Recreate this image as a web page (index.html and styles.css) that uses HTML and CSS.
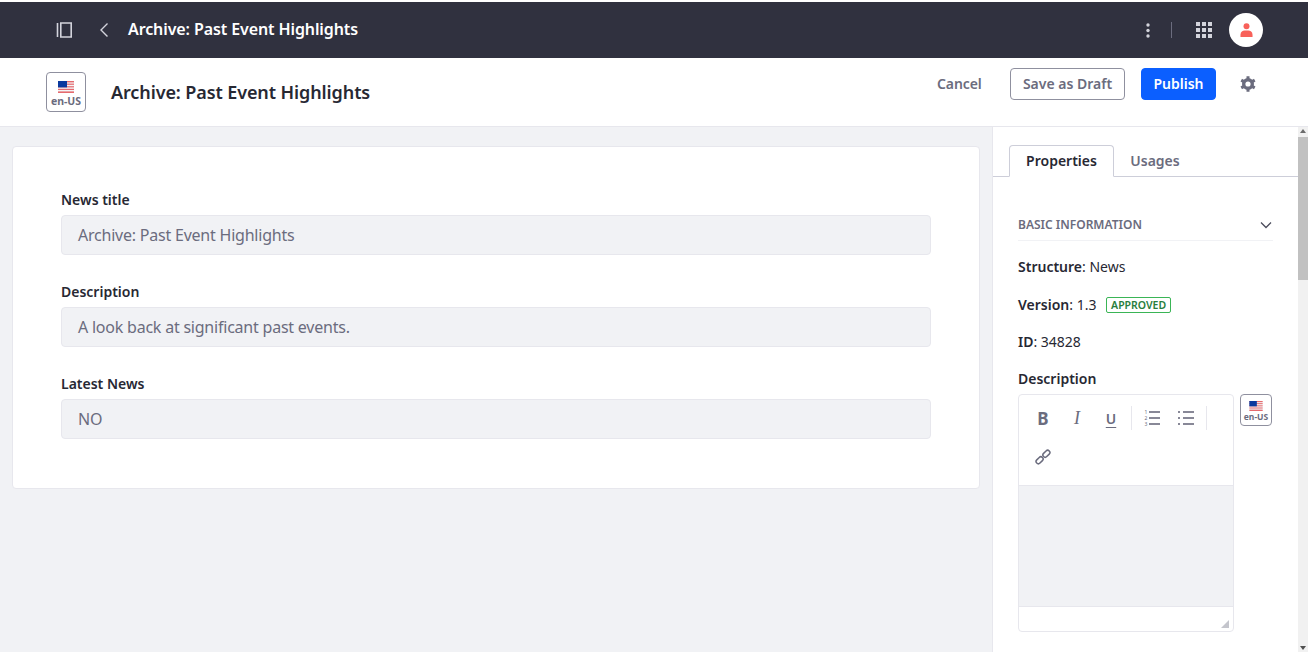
FILE: index.html
```html
<!DOCTYPE html>
<html lang="en">
<head>
<meta charset="utf-8">
<title>Archive: Past Event Highlights</title>
<link rel="stylesheet" href="styles.css">
</head>
<body>
<svg class="defs" width="0" height="0" aria-hidden="true">
  <defs>
    <symbol id="flag" viewBox="0 0 16 12">
      <rect width="16" height="12" fill="#f4f4f6"/>
      <rect y="0" width="16" height="1.4" fill="#e56a6e"/>
      <rect y="2.6" width="16" height="1.2" fill="#e56a6e"/>
      <rect y="5.2" width="16" height="1.2" fill="#e56a6e"/>
      <rect y="7.8" width="16" height="1.2" fill="#e56a6e"/>
      <rect y="10.4" width="16" height="1.6" fill="#e56a6e"/>
      <rect width="9" height="6.4" fill="#0b3a9e"/>
    </symbol>
  </defs>
</svg>
<div class="topbar">
  <div class="topbar-left">
    <svg class="ic-panel" viewBox="0 0 16 16" width="16" height="16"><path d="M1.500 1v14M4.800 1H15.200v14H4.800z" fill="none" stroke="#d3d4dc" stroke-width="1.600"/></svg>
    <svg class="ic-back" viewBox="0 0 10 16" width="10" height="16"><path d="M8.500 1.500 2 8l6.500 6.500" fill="none" stroke="#d3d4dc" stroke-width="1.400"/></svg>
    <span class="topbar-title">Archive: Past Event Highlights</span>
  </div>
  <div class="topbar-right">
    <svg class="ic-dots" viewBox="0 0 4 15" width="4" height="15"><circle cx="2" cy="2" r="1.700" fill="#d3d4dc"/><circle cx="2" cy="7.500" r="1.700" fill="#d3d4dc"/><circle cx="2" cy="13" r="1.700" fill="#d3d4dc"/></svg>
    <span class="topbar-sep"></span>
    <svg class="ic-grid" viewBox="0 0 16 16" width="16" height="16" fill="#d3d4dc"><rect width="4" height="4"/><rect x="6" width="4" height="4"/><rect x="12" width="4" height="4"/><rect y="6" width="4" height="4"/><rect x="6" y="6" width="4" height="4"/><rect x="12" y="6" width="4" height="4"/><rect y="12" width="4" height="4"/><rect x="6" y="12" width="4" height="4"/><rect x="12" y="12" width="4" height="4"/></svg>
    <span class="avatar"><svg viewBox="0 0 14 15" width="13" height="14"><circle cx="7" cy="3.500" r="3.200" fill="#f8615a"/><path d="M0.500 15v-2.500C.5 9.500 3 8 5 8h4c2 0 4.500 1.500 4.500 4.500V15z" fill="#f8615a"/></svg></span>
  </div>
</div>
<header class="header">
  <div class="header-left">
    <span class="lang lang-lg"><svg class="flag" width="16" height="12"><use href="#flag"/></svg><span>en-US</span></span>
    <h1 class="page-title">Archive: Past Event Highlights</h1>
  </div>
  <div class="header-right">
    <button class="btn btn-link">Cancel</button>
    <button class="btn btn-outline">Save as Draft</button>
    <button class="btn btn-primary">Publish</button>
    <svg class="ic-gear" viewBox="0 0 16 16" width="16" height="16"><g fill="none" stroke="#6b6c7e"><circle cx="8" cy="8" r="4.300" stroke-width="3.400"/><path stroke-width="3" d="M8 .2v3M8 12.800v3M1.250 4.100l2.600 1.500M12.150 10.400l2.600 1.500M1.250 11.900l2.600-1.500M12.150 5.600l2.600-1.500"/></g></svg>
  </div>
</header>
<div class="body-row">
  <main class="main">
    <section class="card">
      <div class="field">
        <label class="label">News title</label>
        <div class="input">Archive: Past Event Highlights</div>
      </div>
      <div class="field">
        <label class="label">Description</label>
        <div class="input">A look back at significant past events.</div>
      </div>
      <div class="field">
        <label class="label">Latest News</label>
        <div class="input">NO</div>
      </div>
    </section>
  </main>
  <aside class="side">
    <nav class="tabs">
      <span class="tab tab-active">Properties</span>
      <span class="tab">Usages</span>
    </nav>
    <div class="side-body">
      <div class="section-head">
        <span>BASIC INFORMATION</span>
        <svg viewBox="0 0 12 8" width="12" height="8"><path d="M1 1.500 6 6.500l5-5" fill="none" stroke="#4b4c5c" stroke-width="1.300"/></svg>
      </div>
      <p class="prop"><b>Structure</b>: News</p>
      <p class="prop"><b>Version</b>: 1.3 <span class="badge">APPROVED</span></p>
      <p class="prop"><b>ID</b>: 34828</p>
      <div class="prop-label">Description</div>
      <div class="editor-row">
        <div class="editor">
          <div class="toolbar">
            <div class="tool-row">
              <span class="tool tool-b">B</span>
              <span class="tool tool-i">I</span>
              <span class="tool tool-u">U</span>
              <span class="tool-sep"></span>
              <span class="tool">
                <svg viewBox="0 0 16 16" width="16" height="16"><g fill="#6b6c7e"><rect x="5" y="1.200" width="11" height="1.600"/><rect x="5" y="7.200" width="11" height="1.600"/><rect x="5" y="13.200" width="11" height="1.600"/><text class="ol-num" x="0.500" y="4">1</text><text class="ol-num" x="0.500" y="10">2</text><text class="ol-num" x="0.500" y="16">3</text></g></svg>
              </span>
              <span class="tool">
                <svg viewBox="0 0 16 16" width="16" height="16"><g fill="#6b6c7e"><rect x="5" y="1.200" width="11" height="1.600"/><rect x="5" y="7.200" width="11" height="1.600"/><rect x="5" y="13.200" width="11" height="1.600"/><rect x="0" y="1.200" width="2" height="1.600"/><rect x="0" y="7.200" width="2" height="1.600"/><rect x="0" y="13.200" width="2" height="1.600"/></g></svg>
              </span>
              <span class="tool-sep"></span>
            </div>
            <div class="tool-row">
              <span class="tool">
                <svg viewBox="0 0 16 16" width="16" height="16"><g fill="none" stroke="#6b6c7e" stroke-width="1.500"><rect x="0.600" y="9" width="8" height="4.500" rx="2.250" transform="rotate(-45 4.600 11.250)"/><rect x="7.400" y="2.500" width="8" height="4.500" rx="2.250" transform="rotate(-45 11.400 4.750)"/></g></svg>
              </span>
            </div>
          </div>
          <div class="editor-area"></div>
          <div class="editor-foot"><svg class="grip" viewBox="0 0 8 8" width="8" height="8"><path d="M8 0v8H0z" fill="#c4c5cc"/></svg></div>
        </div>
        <span class="lang lang-sm"><svg class="flag" width="14" height="10"><use href="#flag"/></svg><span>en-US</span></span>
      </div>
    </div>
  </aside>
  <div class="scrollbar">
    <span class="arrow arrow-up"></span>
    <span class="thumb"></span>
    <span class="arrow arrow-down"></span>
  </div>
</div>
</body>
</html>
```
FILE: styles.css
```css
* { box-sizing: border-box; }
html, body { margin: 0; padding: 0; }
body {
  width: 1308px;
  height: 652px;
  overflow: hidden;
  background: #fff;
  font-family: "Noto Sans", "Open Sans", sans-serif;
  color: #272833;
  padding-top: 2px;
  display: flex;
  flex-direction: column;
}
.defs { position: absolute; }
.topbar {
  height: 56px;
  flex: none;
  background: #30313f;
  display: flex;
  align-items: center;
  justify-content: space-between;
  padding: 0 45px 0 56px;
}
.topbar-left { display: flex; align-items: center; }
.ic-back { margin-left: 27px; }
.topbar-title {
  margin-left: 19px;
  margin-bottom: 2px;
  color: #fff;
  font-size: 16px;
  font-weight: 600;
  letter-spacing: -0.1px;
}
.topbar-right { display: flex; align-items: center; }
.topbar-sep { width: 1px; height: 16px; background: #6b6c7e; margin: 0 24px 0 21px; }
.avatar {
  width: 34px;
  height: 34px;
  border-radius: 50%;
  background: #fff;
  display: flex;
  align-items: center;
  justify-content: center;
  margin-left: 17px;
}
.header {
  height: 69px;
  flex: none;
  background: #fff;
  border-bottom: 1px solid #e7e7ed;
  display: flex;
  justify-content: space-between;
  padding: 10px 52px 0 46px;
}
.header-left { display: flex; align-items: flex-start; padding-top: 4px; }
.lang {
  display: flex;
  flex-direction: column;
  align-items: center;
  background: #fff;
  border: 1px solid #8f909f;
  border-radius: 4px;
  color: #6b6c7e;
  font-weight: 700;
  flex: none;
}
.lang-lg { width: 40px; height: 40px; padding-top: 8px; font-size: 10.500px; line-height: 14px; }
.lang-lg .flag { margin-bottom: 1px; }
.lang-sm { width: 32px; height: 32px; padding-top: 6px; font-size: 8.500px; line-height: 11px; margin-left: 6px; }
.page-title {
  margin: 0 0 0 25px;
  font-size: 18px;
  font-weight: 600;
  line-height: 40px;
  color: #272833;
  letter-spacing: -0.1px;
}
.header-right { display: flex; align-items: flex-start; }
.btn {
  height: 32px;
  font-family: inherit;
  font-size: 14px;
  font-weight: 600;
  border-radius: 4px;
  padding: 0;
  background: none;
  border: 1px solid transparent;
  line-height: 1;
}
.btn-link { color: #6b6c7e; width: 45px; margin-right: 29px; letter-spacing: -0.1px; }
.btn-outline { color: #6b6c7e; border-color: #8f909f; width: 115px; margin-right: 16px; background: #fff; }
.btn-primary { color: #fff; background: #0b5fff; border-color: #0b5fff; width: 75px; margin-right: 24px; }
.ic-gear { margin-top: 8px; }
.body-row { flex: 1; min-height: 0; display: flex; }
.main { width: 992px; flex: none; background: #f1f2f5; padding: 19px 12px 0; }
.card {
  width: 968px;
  height: 343px;
  background: #fff;
  border: 1px solid #e7e7ed;
  border-radius: 4px;
  padding: 44px 48px 0;
  display: flex;
  flex-direction: column;
  gap: 28px;
}
.label { display: block; font-size: 14px; font-weight: 600; line-height: 18px; margin-bottom: 6px; color: #272833; }
.input {
  height: 40px;
  background: #f1f2f5;
  border: 1px solid #e7e7ed;
  border-radius: 4px;
  padding: 0 16px;
  font-size: 16px;
  line-height: 38px;
  letter-spacing: -0.22px;
  color: #6b6c7e;
}
.side { width: 306px; flex: none; background: #fff; border-left: 1px solid #e7e7ed; overflow: hidden; }
.tabs {
  height: 50px;
  display: flex;
  align-items: flex-end;
  padding: 0 0 0 16px;
  border-bottom: 1px solid #cdced9;
}
.tab {
  height: 32px;
  width: 82px;
  margin-bottom: -1px;
  padding-bottom: 2px;
  font-size: 14px;
  font-weight: 600;
  color: #6b6c7e;
  display: flex;
  align-items: center;
  justify-content: center;
}
.tab-active {
  height: 32px;
  width: 105px;
  background: #fff;
  color: #272833;
  border: 1px solid #cdced9;
  border-bottom-color: #fff;
  border-radius: 4px 4px 0 0;
}
.side-body { padding: 0 25px; }
.section-head {
  margin-top: 40px;
  height: 24px;
  display: flex;
  justify-content: space-between;
  align-items: flex-start;
  border-bottom: 1px solid #f1f2f5;
  font-size: 12px;
  line-height: 16px;
  font-weight: 600;
  color: #6b6c7e;
  padding-right: 1px;
}
.section-head svg { margin-top: 4px; }
.prop { margin: 17px 0 0; font-size: 14px; line-height: 20px; color: #272833; height: 20px; }
.section-head + .prop { margin-top: 16px; }
.section-head + .prop + .prop { margin-top: 18px; }
.prop b { font-weight: 600; }
.badge {
  display: inline-block;
  margin-left: 6px;
  border: 1px solid #3ab556;
  border-radius: 2px;
  color: #287d3c;
  font-size: 10.500px;
  font-weight: 600;
  line-height: 14px;
  height: 16px;
  padding: 0 4px;
  vertical-align: 1px;
}
.prop-label { margin-top: 17px; font-size: 14px; font-weight: 600; line-height: 20px; }
.editor-row { display: flex; align-items: flex-start; margin-top: 5px; }
.editor {
  width: 216px;
  height: 238px;
  flex: none;
  border: 1px solid #e7e7ed;
  border-radius: 4px;
  background: #fff;
  display: flex;
  flex-direction: column;
}
.toolbar { height: 91px; flex: none; padding: 4px 0 0 0; border-bottom: 1px solid #e7e7ed; }
.tool-row { display: flex; align-items: center; height: 38px; padding-left: 7px; }
.tool-row + .tool-row { margin-top: 1px; }
.tool {
  width: 34px;
  height: 24px;
  display: flex;
  align-items: center;
  justify-content: center;
  color: #6b6c7e;
}
.tool-b { font-size: 17px; font-weight: 700; }
.tool-i { font-family: "Liberation Serif", serif; font-size: 18px; font-style: italic; }
.tool-u { font-size: 14px; font-weight: 600; text-decoration: underline; text-underline-offset: 3px; }
.ol-num { font-size: 5px; font-family: "Noto Sans", sans-serif; }
.tool-sep { width: 1px; height: 24px; background: #e7e7ed; margin: 0 3px; }
.editor-area { flex: 1; background: #f1f2f5; }
.editor-foot { height: 25px; flex: none; border-top: 1px solid #e7e7ed; position: relative; }
.grip { position: absolute; right: 4px; bottom: 3px; }
.scrollbar { width: 10px; flex: none; background: #f1f1f1; position: relative; }
.thumb { position: absolute; left: 0; right: 0; top: 10px; height: 143px; background: #c1c1c1; }
.arrow { position: absolute; left: 2px; width: 0; height: 0; border-left: 3px solid transparent; border-right: 3px solid transparent; }
.arrow-up { top: 2px; border-bottom: 4px solid #6b6b6b; }
.arrow-down { bottom: 2px; border-top: 4px solid #505050; }
```
